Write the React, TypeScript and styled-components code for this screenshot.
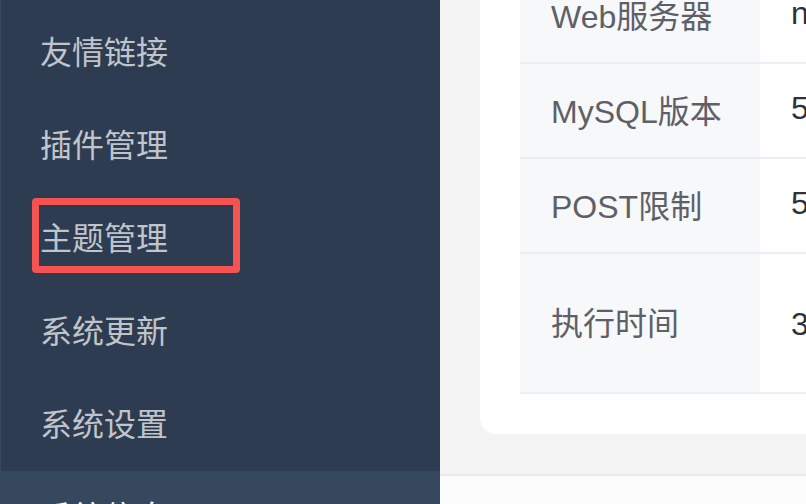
import React from "react";
import styled, { createGlobalStyle } from "styled-components";

const GlobalStyle = createGlobalStyle`
  html, body { margin: 0; padding: 0; }
  body {
    width: 806px;
    height: 504px;
    overflow: hidden;
    font-family: "Liberation Sans", "Noto Sans CJK SC", sans-serif;
  }
`;

const Layout = styled.div`
  display: flex;
  width: 806px;
  height: 504px;
  overflow: hidden;
`;

const Sidebar = styled.nav`
  width: 440px;
  flex: none;
  background: #2d3c50;
  border-left: 1px solid #3a4a5e;
  box-sizing: border-box;
  display: flex;
  flex-direction: column;
  padding-top: 6px;
`;

const MenuItem = styled.div<{ $active?: boolean }>`
  position: relative;
  height: 93px;
  box-sizing: border-box;
  flex: none;
  display: flex;
  align-items: center;
  padding: 0 0 5px 39px;
  font-family: "Noto Sans CJK SC", sans-serif;
  font-size: 32px;
  color: ${(p) => (p.$active ? "#ffffff" : "#c0c4cb")};
  background: ${(p) => (p.$active ? "#35485e" : "transparent")};
`;

const Highlight = styled.span`
  position: absolute;
  left: 31px;
  top: 6px;
  width: 208px;
  height: 75px;
  box-sizing: border-box;
  border: 7px solid #f55252;
  border-radius: 4px;
  pointer-events: none;
`;

const Main = styled.main`
  flex: 1;
  min-width: 0;
  background: #f3f3f3;
  display: flex;
  flex-direction: column;
  overflow: hidden;
`;

const Content = styled.div`
  padding: 0 0 40px 40px;
  flex: none;
`;

const Card = styled.section`
  margin-top: -73px;
  width: 640px;
  background: #ffffff;
  border-radius: 16px;
  padding: 40px 0 40px 40px;
  box-sizing: border-box;
`;

const Table = styled.div`
  display: flex;
  flex-direction: column;
  border-top: 2px solid #ebeef5;
`;

const Row = styled.div<{ $height: number }>`
  display: grid;
  grid-template-columns: 240px 1fr;
  height: ${(p) => p.$height}px;
  border-bottom: 2px solid #ebeef5;
  box-sizing: content-box;
`;

const LabelCell = styled.div`
  background: #f7f8fa;
  display: flex;
  align-items: center;
  padding: 0 0 4px 31px;
  font-size: 32px;
  color: #5e6066;
  white-space: nowrap;
`;

const ValueCell = styled.div`
  display: flex;
  align-items: center;
  padding: 0 0 4px 31px;
  font-size: 32px;
  color: #303133;
  white-space: nowrap;
  overflow: hidden;
`;

const Footer = styled.footer`
  flex: 1;
  background: #fcfcfc;
  border-top: 2px solid #e9e9e9;
`;

const menu = [
  { label: "友情链接" },
  { label: "插件管理" },
  { label: "主题管理", marked: true },
  { label: "系统更新" },
  { label: "系统设置" },
  { label: "系统信息", active: true },
];

const rows = [
  { label: "Web服务器", value: "nginx/1.20.1", height: 93 },
  { label: "MySQL版本", value: "5.7.40-log", height: 93 },
  { label: "POST限制", value: "50M", height: 93 },
  { label: "执行时间", value: "30秒", height: 138 },
];

export default function App() {
  return (
    <>
      <GlobalStyle />
      <Layout>
        <Sidebar>
          {menu.map((m) => (
            <MenuItem key={m.label} $active={m.active}>
              {m.label}
              {m.marked && <Highlight />}
            </MenuItem>
          ))}
        </Sidebar>
        <Main>
          <Content>
            <Card>
              <Table>
                {rows.map((r) => (
                  <Row key={r.label} $height={r.height}>
                    <LabelCell>{r.label}</LabelCell>
                    <ValueCell>{r.value}</ValueCell>
                  </Row>
                ))}
              </Table>
            </Card>
          </Content>
          <Footer />
        </Main>
      </Layout>
    </>
  );
}
